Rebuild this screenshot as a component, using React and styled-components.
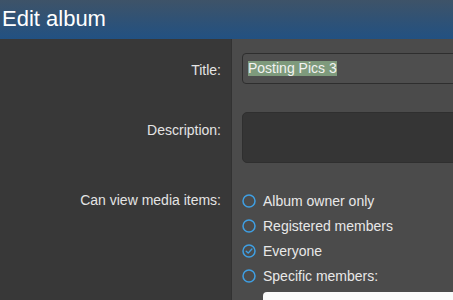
import styled, { createGlobalStyle } from "styled-components";

const GlobalStyle = createGlobalStyle`
    html, body {
        margin: 0;
        padding: 0;
        background: #383838;
        overflow: hidden;
    }

    body {
        font-family: "Liberation Sans", Arial, sans-serif;
    }
`;

const options = [
    { id: "owner", label: "Album owner only" },
    { id: "registered", label: "Registered members" },
    { id: "everyone", label: "Everyone", checked: true },
    { id: "specific", label: "Specific members:" },
];

function RadioIcon({ checked }) {
    return (
        <svg width="14" height="14" viewBox="0 0 14 14">
            <circle cx="7" cy="7" r="6" fill="none" stroke="#3f9fe3" strokeWidth="1.5" />
            {checked && (
                <path d="M4.2 7.2 L6.2 9.1 L9.9 5" fill="none" stroke="#3f9fe3" strokeWidth="1.4" strokeLinecap="round" strokeLinejoin="round" />
            )}
        </svg>
    );
}

function App() {
    return (
        <Page>
            <GlobalStyle />
            <Header>Edit album</Header>

            <Row>
                <Label $top={8}>Title:</Label>
                <Field>
                    <TextInput>
                        <Selected>Posting Pics 3</Selected>
                    </TextInput>
                </Field>
            </Row>

            <Row>
                <Label $top={9}>Description:</Label>
                <Field>
                    <TextArea />
                </Field>
            </Row>

            <Row>
                <Label $top={0}>Can view media items:</Label>
                <Field>
                    <RadioList>
                        {options.map((opt) => (
                            <RadioRow key={opt.id}>
                                <RadioIcon checked={opt.checked} />
                                <span>{opt.label}</span>
                            </RadioRow>
                        ))}
                    </RadioList>
                    <MemberBox />
                </Field>
            </Row>
        </Page>
    );
}

const Page = styled.div`
    width: 453px;
    height: 300px;
    overflow: hidden;
    display: flex;
    flex-direction: column;
`;

const Header = styled.div`
    height: 39px;
    flex-shrink: 0;
    display: flex;
    align-items: center;
    padding: 0 0 2px 2px;
    box-sizing: border-box;
    background: linear-gradient(#3e5368, #225182);
    color: #fff;
    font-family: "Liberation Sans", Arial, sans-serif;
    font-size: 22px;
`;

const Row = styled.div`
    display: grid;
    grid-template-columns: 232px 1fr;
    flex-shrink: 0;
`;

const Label = styled.div`
    background: #383838;
    border-right: 1px solid #323232;
    padding: ${(p) => 14 + p.$top}px 10px 0 0;
    text-align: right;
    color: #e4e4e4;
    font-size: 14px;
    line-height: 18px;
`;

const Field = styled.div`
    background: #4b4b4b;
    padding: 14px 0 14px 10px;
    min-width: 0;
`;

const TextInput = styled.div`
    width: 400px;
    height: 31px;
    box-sizing: border-box;
    border: 1px solid #2e2e2e;
    border-radius: 4px;
    background: #4e4e4e;
    display: flex;
    align-items: center;
    padding-left: 5px;
    font-size: 14px;
    color: #f2f2f2;
`;

const Selected = styled.span`
    background: #7e9a7c;
    line-height: 15px;
`;

const TextArea = styled.div`
    width: 400px;
    height: 51px;
    box-sizing: border-box;
    border: 1px solid #2f2f2f;
    border-radius: 5px;
    background: #353535;
`;

const RadioList = styled.div`
    display: flex;
    flex-direction: column;
    gap: 5px;
`;

const RadioRow = styled.div`
    display: flex;
    align-items: center;
    gap: 7px;
    height: 20px;
    color: #e8e8e8;
    font-size: 14px;

    svg {
        flex-shrink: 0;
    }
`;

const MemberBox = styled.div`
    margin: 6px 0 0 21px;
    width: 400px;
    height: 30px;
    border-radius: 4px;
    background: #fafafa;
`;

export default App;
